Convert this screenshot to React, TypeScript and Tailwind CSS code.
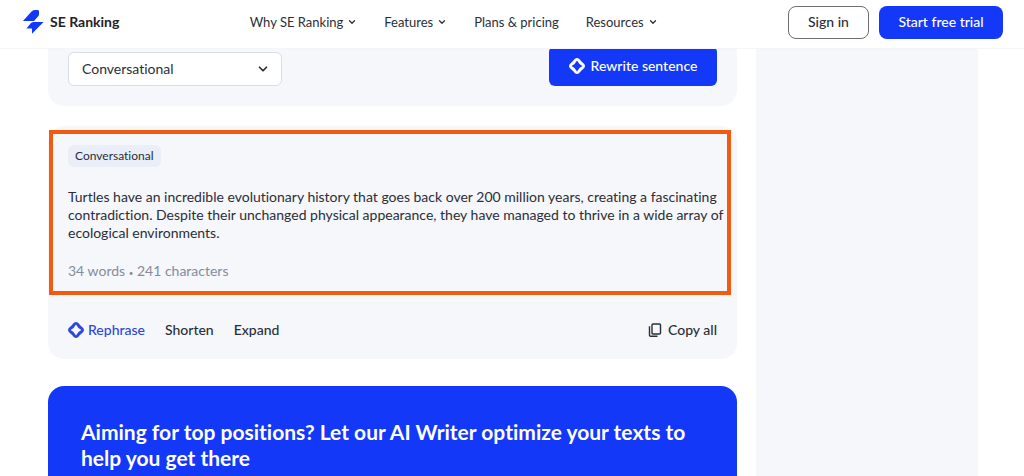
import React from 'react';
import { ChevronDown } from 'lucide-react';

const navItems = [
  { label: 'Why SE Ranking', hasMenu: true },
  { label: 'Features', hasMenu: true },
  { label: 'Plans & pricing', hasMenu: false },
  { label: 'Resources', hasMenu: true },
];

const result = {
  tone: 'Conversational',
  lines: [
    'Turtles have an incredible evolutionary history that goes back over 200 million years, creating a fascinating',
    'contradiction. Despite their unchanged physical appearance, they have managed to thrive in a wide array of',
    'ecological environments.',
  ],
  words: 34,
  characters: 241,
};

function Logo() {
  return (
    <a href="#" className="flex items-center gap-1.5 text-sm font-bold text-[#1f2229]">
      <svg viewBox="0 0 22 24" className="h-6 w-[22px]" fill="#1338f8" aria-hidden="true">
        <path d="M1 11 9.500 1.500Q10.800 0 12.800 0h2.800q1.400 0 1.400 1.400V4q0 1.500-1 2.600L12 11Z" />
        <path d="M21.500 12 10 23.800V18.500H4.500L8.500 13.500Q9.700 12 11.500 12Z" />
      </svg>
      SE Ranking
    </a>
  );
}

function SparkIcon() {
  return (
    <svg viewBox="0 0 16 16" className="size-4 shrink-0" fill="currentColor" aria-hidden="true">
      <path
        fillRule="evenodd"
        d="M6 .8Q8-.7 10 .8Q11.200 1.800 12 2.900Q12.500 3.500 13.100 4Q14.200 4.800 15.200 6Q16.700 8 15.200 10Q14.200 11.200 13.100 12Q12.500 12.500 12 13.100Q11.200 14.200 10 15.200Q8 16.700 6 15.200Q4.800 14.200 4 13.100Q3.500 12.500 2.900 12Q1.800 11.200 .8 10Q-.7 8 .8 6Q1.800 4.800 2.900 4Q3.500 3.500 4 2.900Q4.800 1.800 6 .8ZM8 2.600Q6.300 6.300 2.600 8Q6.300 9.700 8 13.400Q9.700 9.700 13.400 8Q9.700 6.300 8 2.600Z"
      />
    </svg>
  );
}

function CopyIcon() {
  return (
    <svg viewBox="0 0 14 14" className="size-3.5" fill="none" stroke="currentColor" strokeWidth="1.4" aria-hidden="true">
      <rect x="4" y="1" width="8.500" height="10" rx="1" />
      <path d="M1.500 3.200V12.300q0 1 1 1H9.500" />
    </svg>
  );
}

export default function App() {
  return (
    <div className="flex h-screen flex-col overflow-hidden bg-white font-['Lato',sans-serif] text-sm text-[#2b2e38] [font-variant-ligatures:none]">
      <header className="relative z-10 flex h-[49px] shrink-0 items-center justify-between border-b border-[#f4f5f8] bg-white pr-[21px] pb-1 pl-[22px]">
        <Logo />
        <nav className="flex items-center gap-[27px] text-[13px]">
          {navItems.map(item => (
            <a key={item.label} href="#" className="flex items-center gap-1">
              {item.label}
              {item.hasMenu && <ChevronDown className="size-2.5" strokeWidth={3} />}
            </a>
          ))}
        </nav>
        <div className="flex gap-2.5 font-medium">
          <button className="h-[33px] w-[81px] rounded-lg border border-[#6b6e76]">Sign in</button>
          <button className="h-[33px] w-[124px] rounded-lg bg-[#1338f8] text-white">Start free trial</button>
        </div>
      </header>

      <main className="flex min-h-0 flex-1 gap-[19px] pr-[46px] pl-12">
        <div className="flex min-w-0 flex-1 flex-col">
          <section className="-mt-1 flex h-[61px] shrink-0 items-end justify-between rounded-b-2xl bg-[#f5f7fb] px-5 pb-5">
            <div className="relative">
              <select
                aria-label="Tone"
                className="h-[34px] w-[214px] appearance-none rounded-md border border-[#d9dde6] bg-white px-[13px]"
              >
                <option>Conversational</option>
              </select>
              <ChevronDown className="pointer-events-none absolute top-2.5 right-3 size-3.5" strokeWidth={3} />
            </div>
            <button className="flex h-10 w-[168px] items-center justify-center gap-1.5 rounded-md bg-[#1338f8] font-medium text-white">
              <SparkIcon />
              Rewrite sentence
            </button>
          </section>

          <section className="mt-5 shrink-0 rounded-2xl bg-[#f5f7fb] pt-1">
            <div className="mr-1.5 ml-px h-[165px] border-4 border-[#f25a12] px-[15px] pt-[11px]">
              <span className="inline-flex h-[22px] items-center rounded-md bg-[#e9eef8] px-[7px] text-xs">
                {result.tone}
              </span>
              <p className="mt-[21px] leading-[18px] whitespace-nowrap">
                {result.lines.map(line => (
                  <span key={line} className="block">{line}</span>
                ))}
              </p>
              <p className="mt-5 leading-[18px] text-[#858c9c]">
                {result.words} words <span className="text-[8px]">•</span> {result.characters} characters
              </p>
            </div>
            <div className="mx-5 mt-[5px] flex h-[59px] items-center justify-between border-t border-[#fafbfd] font-medium">
              <div className="flex items-center gap-5">
                <button className="flex items-center gap-1 text-[#2b48dc]">
                  <SparkIcon />
                  Rephrase
                </button>
                <button>Shorten</button>
                <button>Expand</button>
              </div>
              <button className="flex items-center gap-1.5">
                <CopyIcon />
                Copy all
              </button>
            </div>
          </section>

          <section className="mt-[27px] flex-1 rounded-t-2xl bg-[#1338f8] px-[33px] pt-[33px] text-white">
            <h2 className="text-[21px] leading-[26px] font-bold whitespace-nowrap">
              Aiming for top positions? Let our AI Writer optimize your texts to
              <br />
              help you get there
            </h2>
          </section>
        </div>

        <aside className="w-[222px] shrink-0 bg-[#f5f7fb]" />
      </main>
    </div>
  );
}
